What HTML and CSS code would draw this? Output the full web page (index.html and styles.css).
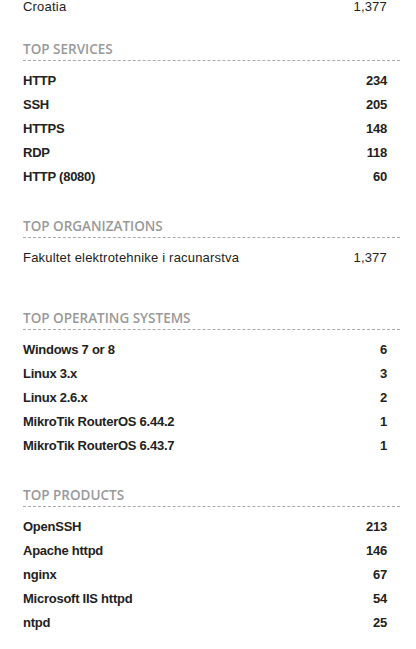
FILE: index.html
```html
<!DOCTYPE html>
<html>
<head>
<meta charset="utf-8">
<link rel="stylesheet" href="styles.css">
</head>
<body>
<div class="page">
  <ul class="rows rows-first">
    <li class="row plain"><span>Croatia</span><span>1,377</span></li>
  </ul>

  <h6 class="heading">Top Services</h6>
  <ul class="rows">
    <li class="row"><span>HTTP</span><span>234</span></li>
    <li class="row"><span>SSH</span><span>205</span></li>
    <li class="row"><span>HTTPS</span><span>148</span></li>
    <li class="row"><span>RDP</span><span>118</span></li>
    <li class="row"><span>HTTP (8080)</span><span>60</span></li>
  </ul>

  <h6 class="heading">Top Organizations</h6>
  <ul class="rows">
    <li class="row plain"><span>Fakultet elektrotehnike i racunarstva</span><span>1,377</span></li>
  </ul>

  <h6 class="heading heading-wide">Top Operating Systems</h6>
  <ul class="rows">
    <li class="row"><span>Windows 7 or 8</span><span>6</span></li>
    <li class="row"><span>Linux 3.x</span><span>3</span></li>
    <li class="row"><span>Linux 2.6.x</span><span>2</span></li>
    <li class="row"><span>MikroTik RouterOS 6.44.2</span><span>1</span></li>
    <li class="row"><span>MikroTik RouterOS 6.43.7</span><span>1</span></li>
  </ul>

  <h6 class="heading">Top Products</h6>
  <ul class="rows">
    <li class="row"><span>OpenSSH</span><span>213</span></li>
    <li class="row"><span>Apache httpd</span><span>146</span></li>
    <li class="row"><span>nginx</span><span>67</span></li>
    <li class="row"><span>Microsoft IIS httpd</span><span>54</span></li>
    <li class="row"><span>ntpd</span><span>25</span></li>
  </ul>
</div>
</body>
</html>
```
FILE: styles.css
```css
html, body {
  margin: 0;
  padding: 0;
  background: #fff;
}
.page {
  width: 377px;
  padding: 0 16px 0 23px;
  font-family: "Liberation Sans", Arial, sans-serif;
  color: #222;
}
.rows {
  list-style: none;
  margin: 8px 0 0;
  padding: 0;
}
.rows-first {
  margin-top: 0;
}
.row {
  display: flex;
  justify-content: space-between;
  height: 24px;
  line-height: 24px;
  font-size: 13px;
  font-weight: bold;
  letter-spacing: -0.25px;
  padding-right: 13px;
}
.row.plain {
  font-weight: normal;
  letter-spacing: 0.2px;
}
.rows-first .row {
  height: 18px;
  line-height: 14px;
}
.heading {
  margin: 27px 0 0;
  height: 20px;
  line-height: 20px;
  padding-bottom: 1px;
  border-bottom: 1px dashed #aaa;
  font-family: "Open Sans", sans-serif;
  font-weight: 600;
  font-size: 13.5px;
  text-transform: uppercase;
  color: #999;
}
.rows-first + .heading {
  margin-top: 21px;
}
.heading-wide {
  margin-top: 38px;
}
```
